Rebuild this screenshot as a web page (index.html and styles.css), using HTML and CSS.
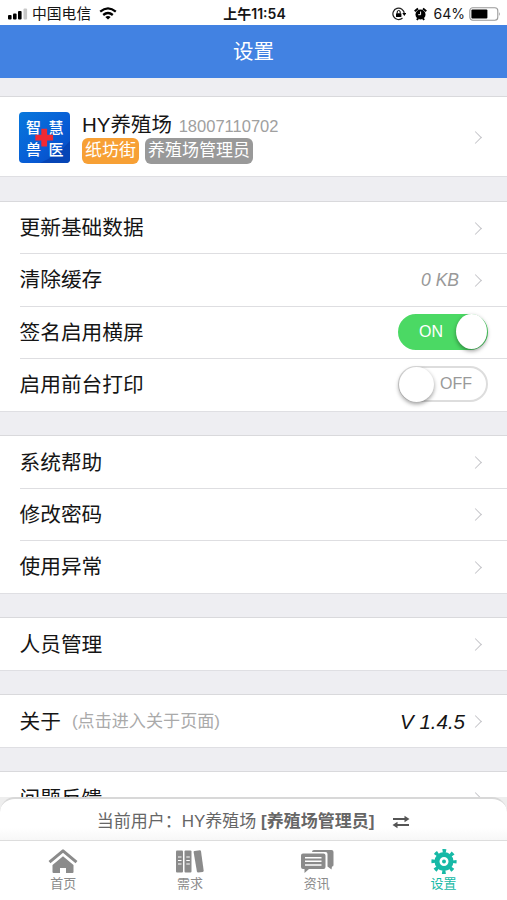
FILE: index.html
```html
<!DOCTYPE html>
<html lang="zh-CN">
<head>
<meta charset="utf-8">
<title>设置</title>
<link rel="stylesheet" href="styles.css">
</head>
<body>
<div class="app">
  <div class="status">
    <div class="status-left">
      <svg class="signal" width="20" height="12" viewBox="0 0 20 12"><rect x="0" y="7" width="3.6" height="4.5" rx="1"/><rect x="5" y="5.5" width="3.6" height="6" rx="1"/><rect x="10" y="3" width="3.6" height="8.500" rx="1"/><rect x="15.500" y="0.500" width="3.6" height="11" rx="1" fill="#c8c8c8"/></svg>
      <span class="carrier">中国电信</span>
      <svg class="wifi" width="18" height="13" viewBox="0 0 18 13"><g fill="none" stroke="#000" stroke-width="2.300"><path d="M1.200 4.700Q9-1.900 16.800 4.700"/><path d="M4.200 8Q9 4 13.800 8"/></g><path d="M6.300 9.900Q9 7.900 11.700 9.900L9 12.600Z"/></svg>
    </div>
    <div class="clock">上午11:54</div>
    <div class="status-right">
      <svg width="14" height="14" viewBox="0 0 14 14"><path d="M12.300 6.500A5.700 5.700 0 1 0 10.500 11" fill="none" stroke="#222" stroke-width="1.200"/><path d="M10.300 6h4l-2 3z"/><rect x="4" y="6.200" width="5.400" height="3.800" rx=".5"/><path d="M5.200 6.500V5a1.500 1.500 0 0 1 3 0v1.500" fill="none" stroke="#000"/></svg>
      <svg class="alarm" width="13" height="14" viewBox="0 0 13 14"><circle cx="6.500" cy="7.500" r="5"/><path d="M.7 4.300L4 1.500M12.300 4.300L9 1.500M2.800 12.800l1.400-1.500M10.200 12.800l-1.400-1.500" stroke="#000" stroke-width="1.900"/><path d="M6.600 4.500v3.200H4.200" fill="none" stroke="#fff"/></svg>
      <span class="percent">64%</span>
      <svg width="32" height="14" viewBox="0 0 32 14"><rect x=".8" y=".8" width="28" height="12.400" rx="3" fill="none" stroke="#999" stroke-width="1.100"/><rect x="2.400" y="2.400" width="16" height="9.200" rx="1"/><path d="M30.300 5q1.500 2 0 4z" fill="#888"/></svg>
    </div>
  </div>
  <div class="header">设置</div>
  <div class="content">
    <div class="group profile">
      <svg class="logo" width="51" height="51" viewBox="0 0 51 51"><defs><linearGradient id="blue" x1="0" y1="0" x2="1" y2="1"><stop offset="0" stop-color="#0878dc"/><stop offset=".6" stop-color="#075bd5"/><stop offset="1" stop-color="#0748bd"/></linearGradient></defs><rect width="51" height="51" rx="4" fill="url(#blue)"/><path d="M21 51Q38 44 51 29V47q0 4-4 4z" fill="#0645b6"/><g class="logo-text"><text x="7" y="21">智</text><text x="29.500" y="21">慧</text><text x="7" y="42.500">兽</text><text x="29.500" y="42.500">医</text></g><path d="M22.300 16.800h5.800v6h6v5.600h-6v6h-5.800v-6h-6v-5.600h6z" fill="#ef2934"/></svg>
      <div class="who">
        <div class="name">HY养殖场 <span class="phone">18007110702</span></div>
        <div class="tags"><span class="tag orange">纸坊街</span><span class="tag">养殖场管理员</span></div>
      </div>
      <i class="chevron"></i>
    </div>
    <div class="group">
      <div class="row">更新基础数据<i class="chevron"></i></div>
      <div class="row">清除缓存<span class="value">0 KB</span><i class="chevron"></i></div>
      <div class="row">签名启用横屏<span class="switch on"><span>ON</span><b></b></span></div>
      <div class="row">启用前台打印<span class="switch"><b></b><span>OFF</span></span></div>
    </div>
    <div class="group">
      <div class="row">系统帮助<i class="chevron"></i></div>
      <div class="row">修改密码<i class="chevron"></i></div>
      <div class="row">使用异常<i class="chevron"></i></div>
    </div>
    <div class="group"><div class="row">人员管理<i class="chevron"></i></div></div>
    <div class="group"><div class="row">关于<small>(点击进入关于页面)</small><span class="value version">V 1.4.5</span><i class="chevron"></i></div></div>
    <div class="group"><div class="row">问题反馈<i class="chevron"></i></div></div>
  </div>
  <div class="bottom">
    <div class="user"><span>当前用户：HY养殖场 <b>[养殖场管理员]</b></span>
      <svg width="18" height="14" viewBox="0 0 18 14"><path d="M1 4h12M5 10h12" stroke="#555" stroke-width="1.800"/><path d="M12.500 0.800L17.500 4l-5 3.200zM5.500 6.800L.5 10l5 3.200z" fill="#555"/></svg>
    </div>
    <div class="tabs">
      <div class="tab"><svg width="32" height="26" viewBox="0 0 32 26"><path d="M2.500 14.200L16 2.900l13.500 11.300" fill="none" stroke="#8b8b8b" stroke-width="3" stroke-linejoin="round"/><path d="M16 8.200L26.500 17v7q0 1-1 1H19v-5h-6v5H6.500q-1 0-1-1v-7z"/></svg><span>首页</span></div>
      <div class="tab"><svg width="32" height="26" viewBox="0 0 32 26"><rect x="2" y="2.500" width="7" height="22" rx="1"/><rect x="10.500" y="2.500" width="7" height="22" rx="1"/><path d="M20.500 3l5.300-.8q1 0 1.200 1l2.700 19.500q0 1-1 1.200l-4.600.6q-1 0-1.200-1L19.600 4q0-.8.9-1z"/><path d="M4 9h3.500M4 12.500h3.500M4 16h3.500M12.300 9h3.500M12.300 12.500h3.500M12.300 16h3.500" stroke="#fff" stroke-width="1.200"/></svg><span>需求</span></div>
      <div class="tab"><svg width="34" height="26" viewBox="0 0 34 26"><path d="M14 2h17.500q2 0 2 2v13q0 1.500-1.500 1.500l-.5 3-4-3V6q0-2-2-2H12q0-2 2-2z"/><path d="M3 5.500h20.500q2 0 2 2V19q0 2-2 2H9l-4.500 4V21H3q-2 0-2-2V7.500q0-2 2-2z"/><path d="M5 9.700h16.500M5 13.300h16.500M5 16.900h16.500" stroke="#fff" stroke-width="1.500"/></svg><span>资讯</span></div>
      <div class="tab active"><svg width="28" height="26" viewBox="0 0 28 26"><circle cx="14" cy="13.500" r="7" fill="none" stroke="#16b9a6" stroke-width="5"/><circle cx="14" cy="13.500" r="10.800" fill="none" stroke="#16b9a6" stroke-width="3.600" stroke-dasharray="3.600 4.882" stroke-dashoffset="1.800"/><circle cx="14" cy="13.500" r="2"/></svg><span>设置</span></div>
    </div>
  </div>
</div>
</body>
</html>
```
FILE: styles.css
```css
* { box-sizing: border-box; }
body { margin: 0; font-family: "Liberation Sans", "Noto Sans CJK SC", sans-serif; color: #151515; }
svg { display: block; flex: none; }
.app { height: 900px; display: flex; flex-direction: column; overflow: hidden; background: #eeeef2; position: relative; }
.status { height: 25px; flex: none; background: #fff; display: grid; grid-template-columns: 1fr auto 1fr; align-items: center; padding: 2px 6px 0 8px; font-size: 14.500px; }
.status-left, .status-right { display: flex; align-items: center; }
.status-right { justify-content: flex-end; }
.carrier { margin: 0 8px 0 4px; font-size: 14.800px; line-height: 20px; }
.clock { font-family: Inter, "Noto Sans CJK SC", sans-serif; font-size: 14px; font-weight: 600; line-height: 20px; }
.alarm { margin: 0 7px 0 8px; }
.percent { font-family: Inter, sans-serif; font-size: 14px; margin-right: 4px; }
.header { height: 53px; flex: none; background: #4282e2; color: #fff; font-size: 20.500px; line-height: 54px; text-align: center; }
.content { flex: 1; min-height: 0; overflow: hidden; padding-top: 18px; }
.group { background: #fff; border-top: 1px solid #d9d9dc; box-shadow: 0 1px #dfdfe3; margin-bottom: 24.500px; }
.profile { height: 80px; display: flex; align-items: center; padding: 1px 25px 0 19px; }
.who { margin-left: 12px; flex: 1; }
.name { font-size: 20.500px; line-height: 27px; height: 27px; white-space: nowrap; }
.phone { font-size: 16.500px; color: #a0a0a0; margin-left: 1px; }
.tags { display: flex; gap: 6px; }
.tag { background: #999; color: #fff; border-radius: 6px; height: 26px; line-height: 26px; padding: 0 3px; font-size: 17px; }
.orange { background: #f7a035; }
.logo-text { fill: #fff; font-size: 15px; font-weight: 500; }
.row { height: 52.500px; display: flex; align-items: center; padding: 2px 25px 0 19.500px; font-size: 20.700px; line-height: 30px; background: linear-gradient(#dedee1, #dedee1) 20px 0 / 100% 1px no-repeat; }
.row:first-child { height: 51.500px; background: none; }
.chevron { width: 9px; height: 9px; border: solid #c5c5c9; border-width: 1.500px 1.500px 0 0; transform: rotate(45deg); margin-left: auto; margin-right: 2px; flex: none; }
.value { margin-left: auto; font-style: italic; font-size: 17.500px; color: #999; }
.value + .chevron { margin-left: 12px; }
.version { color: #151515; font-size: 20.500px; }
.version + .chevron { margin-left: 6px; }
small { font-size: 17.100px; color: #aaa; margin-left: 11px; }
.switch { width: 90px; height: 36px; border-radius: 18px; margin: -2px -6px 0 auto; border: 2px solid #ddd; display: flex; align-items: center; justify-content: space-between; color: #999; font-size: 16px; }
.switch span { margin: 0 14px 0 19px; }
.switch b { width: 35px; height: 35px; border-radius: 50%; background: #fff; box-shadow: 0 2px 4px rgba(0,0,0,.4); margin: -1px; }
.switch:not(.on) span { margin-left: 0; }
.on { background: #4bd964; border-color: #4bd964; color: #fff; }
.bottom { position: absolute; left: 0; right: 0; bottom: 0; height: 103px; background: #eee; }
.user { height: 43px; border-top: 2px solid #d8d8d8; border-radius: 15px 15px 0 0; background: linear-gradient(#fff 70%, #f7f7f7); display: flex; align-items: center; justify-content: center; gap: 18px; font-size: 17px; line-height: 26px; color: #666; padding-top: 4px; }
.tabs { height: 60px; display: grid; grid-template-columns: repeat(4, 1fr); background: #fff; border-top: 1px solid #ddd; }
.tab { display: flex; flex-direction: column; align-items: center; padding-top: 7px; color: #8b8b8b; fill: #8b8b8b; font-size: 13px; line-height: 20px; }
.active { color: #16b9a6; fill: #16b9a6; }
```
